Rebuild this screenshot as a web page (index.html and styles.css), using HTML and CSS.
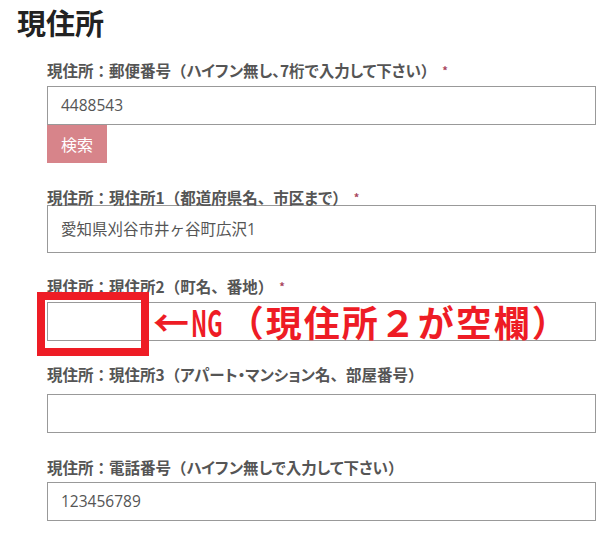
FILE: index.html
```html
<!DOCTYPE html>
<html lang="ja">
<head>
    <meta charset="UTF-8">
    <meta name="viewport" content="width=device-width, initial-scale=1.0">
    <title>現住所</title>
    <link rel="stylesheet" href="styles.css">
</head>
<body>
    <h2 class="section-title">現住所</h2>

    <div class="form">
        <div class="field field-zip">
            <label>現住所：郵便番号（<span class="kana">ハイフン</span>無<span class="kana">し、</span>7桁<span class="kana">で</span>入力<span class="kana">して</span>下<span class="kana">さい</span>）<span class="req">*</span></label>
            <div class="input-box">4488543</div>
            <button class="search-btn">検索</button>
        </div>

        <div class="field field-addr1">
            <label>現住所：現住所1（都道府県名、市区<span class="kana">まで</span>）<span class="req">*</span></label>
            <div class="input-box tall">愛知県刈谷市井ヶ谷町広沢1</div>
        </div>

        <div class="field field-addr2">
            <label>現住所：現住所2（町名、番地）<span class="req">*</span></label>
            <div class="input-wrap">
                <div class="input-box"></div>
                <div class="ng-frame"></div>
                <div class="ng-note">←<span class="ng">NG</span>（現住所２が空欄）</div>
            </div>
        </div>

        <div class="field field-addr3">
            <label>現住所：現住所3（<span class="kana">アパート・マンション</span>名、部屋番号）</label>
            <div class="input-box"></div>
        </div>

        <div class="field field-tel">
            <label>現住所：電話番号（<span class="kana">ハイフン</span>無<span class="kana">しで</span>入力<span class="kana">して</span>下<span class="kana">さい</span>）</label>
            <div class="input-box">123456789</div>
        </div>
    </div>
</body>
</html>
```

FILE: styles.css
```css
body {
    margin: 0;
    padding: 0;
    background: #fff;
    font-family: "Noto Sans CJK JP", sans-serif;
    color: #555;
}

.section-title {
    margin: 0;
    padding: 2px 0 0 17px;
    font-size: 29px;
    line-height: 40px;
    font-weight: bold;
    color: #222;
}

.form {
    width: 549px;
    margin-left: 47px;
}

.field label {
    display: block;
    font-size: 15.5px;
    line-height: 22px;
    font-weight: bold;
    color: #555;
}

.kana {
    font-feature-settings: "palt";
}

.req {
    margin-left: 6px;
    font-size: 11px;
    color: #a8455d;
    vertical-align: top;
}

.input-box {
    box-sizing: border-box;
    height: 39px;
    border: 1px solid #999;
    padding: 0 13px;
    font-family: "Open Sans", "Noto Sans CJK JP", sans-serif;
    font-size: 15.5px;
    line-height: 37px;
    color: #555;
}

.input-box.tall {
    height: 48px;
    line-height: 46px;
}

.search-btn {
    display: block;
    height: 38px;
    padding: 0 14px;
    border: none;
    background: #d7848a;
    color: #fff;
    font-family: "Noto Sans CJK JP", sans-serif;
    font-size: 16px;
}

.field-zip { margin-top: 17px; }
.field-zip .input-box { margin-top: 5px; }

.field-addr1 { margin-top: 23px; }
.field-addr1 .input-box { margin-top: -3px; }

.field-addr2 { margin-top: 22px; }
.field-addr2 .input-wrap { margin-top: 5px; }

.field-addr3 { margin-top: 22px; }
.field-addr3 .input-box { margin-top: 9px; }

.field-tel { margin-top: 23px; }
.field-tel .input-box { margin-top: 4px; }

.input-wrap {
    position: relative;
}

.ng-frame {
    position: absolute;
    left: -10px;
    top: -10px;
    width: 112px;
    height: 64px;
    box-sizing: border-box;
    border: 8px solid #ee1c25;
}

.ng-note {
    position: absolute;
    left: 106px;
    top: 0;
    line-height: 39px;
    font-size: 36px;
    font-weight: bold;
    color: #ee1c25;
    letter-spacing: 2px;
    white-space: nowrap;
}

.ng {
    display: inline-block;
    transform: scaleX(0.6);
    transform-origin: 0 50%;
    margin-right: -16px;
    letter-spacing: 0;
}
```
